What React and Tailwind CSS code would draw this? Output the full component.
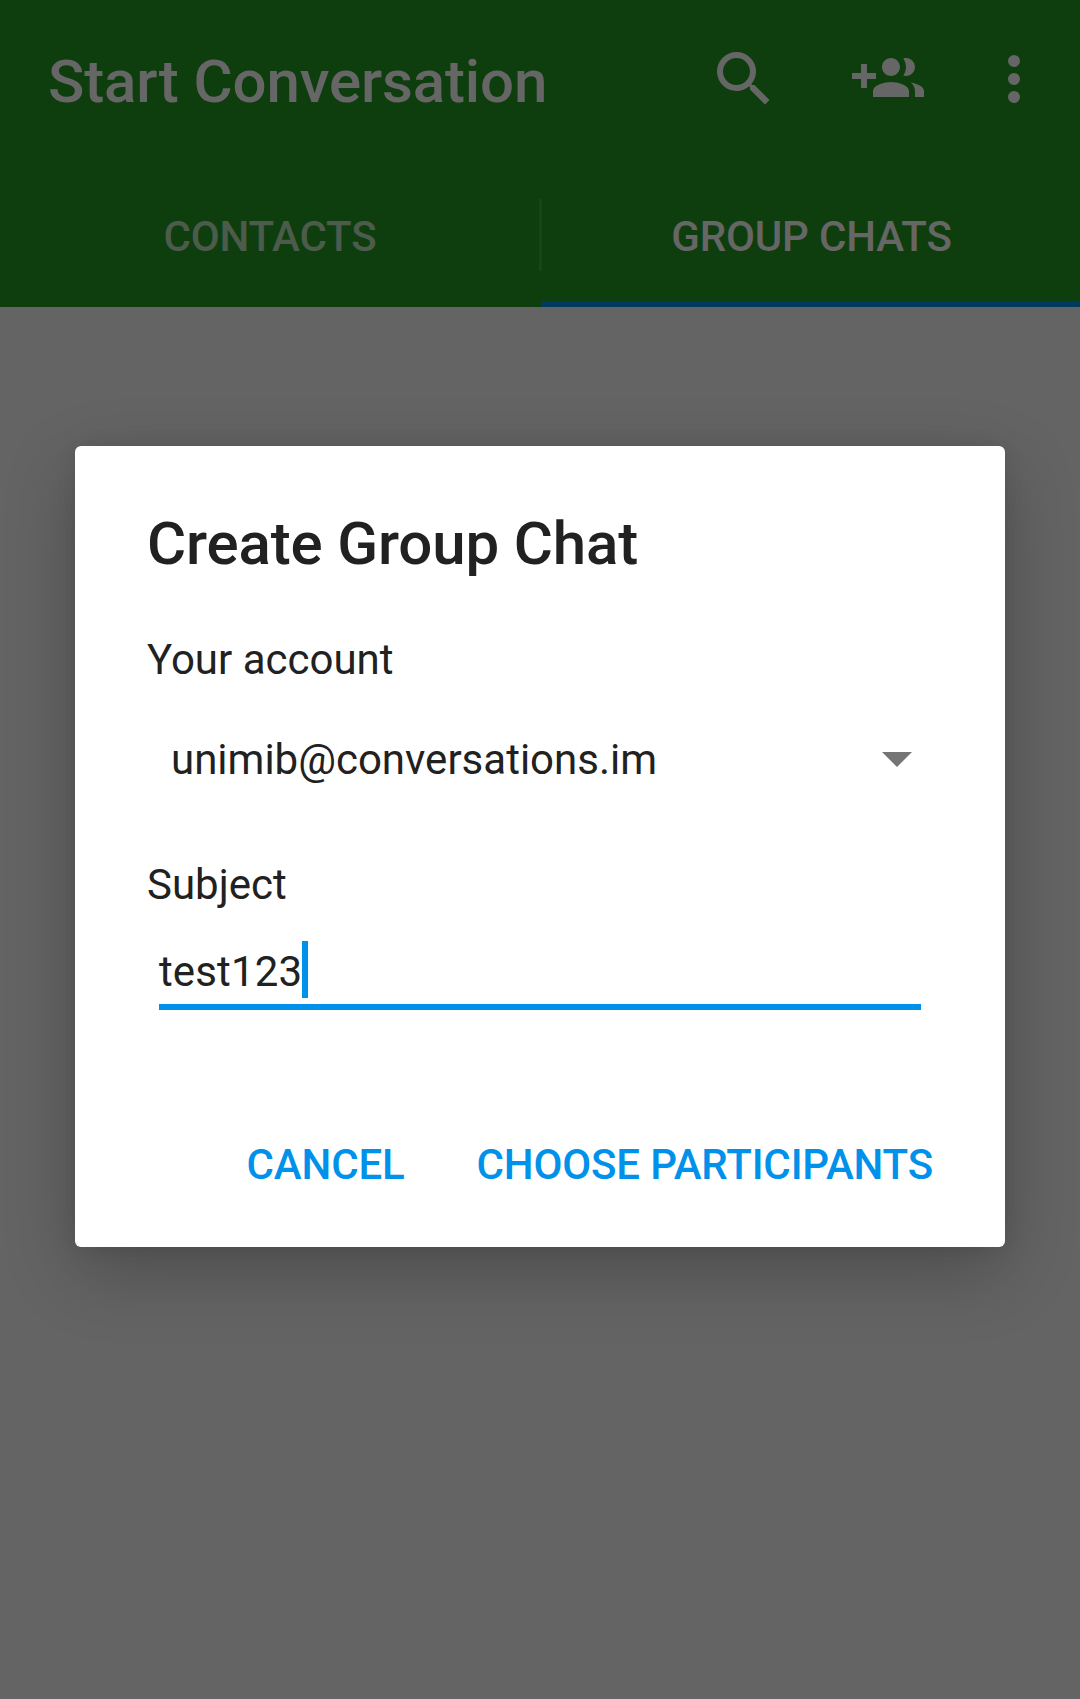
const SearchIcon = () => (
  <svg className="size-[72px]" viewBox="0 0 24 24" fill="currentColor">
    <path d="M15.5 14h-.79l-.28-.27A6.471 6.471 0 0 0 16 9.5 6.5 6.5 0 1 0 9.5 16c1.61 0 3.09-.59 4.23-1.57l.27.28v.79l5 4.99L20.49 19l-4.99-5zm-6 0C7.01 14 5 11.99 5 9.5S7.01 5 9.5 5 14 7.01 14 9.5 11.99 14 9.5 14z" />
  </svg>
);

const GroupAddIcon = () => (
  <svg className="size-[72px]" viewBox="0 0 24 24" fill="currentColor">
    <path d="M8 10H5V7H3v3H0v2h3v3h2v-3h3v-2zm10 1c1.66 0 2.99-1.34 2.99-3S19.66 5 18 5c-.32 0-.63.05-.91.14.57.81.9 1.79.9 2.86s-.34 2.04-.9 2.86c.28.09.59.14.91.14zm-5 0c1.66 0 2.99-1.34 2.99-3S14.66 5 13 5c-1.66 0-3 1.34-3 3s1.34 3 3 3zm6.62 2.16c.83.73 1.38 1.66 1.38 2.84v2h3v-2c0-1.54-2.37-2.49-4.38-2.84zM13 13c-2 0-6 1-6 3v2h12v-2c0-2-4-3-6-3z" />
  </svg>
);

const MoreIcon = () => (
  <svg className="size-[72px]" viewBox="0 0 24 24" fill="currentColor">
    <circle cx="12" cy="6" r="2" />
    <circle cx="12" cy="12" r="2" />
    <circle cx="12" cy="18" r="2" />
  </svg>
);

function Header() {
  return (
    <header className="flex h-[307px] flex-col bg-[#0f3e0e] text-[#666666]">
      <div className="flex h-[163px] items-start justify-between pt-[43px] pr-[30px] pl-12">
        <h1 className="text-[60px] leading-[77px] font-medium tracking-[-0.13px] whitespace-nowrap">Start Conversation</h1>
        <div className="flex">
          <button aria-label="Search"><SearchIcon /></button>
          <button aria-label="Add group" className="ml-[72px]"><GroupAddIcon /></button>
          <button aria-label="More options" className="ml-[54px]"><MoreIcon /></button>
        </div>
      </div>
      <nav className="flex h-[144px] text-[42px] leading-[49px] font-medium tracking-[-0.16px]">
        <button className="w-[539px] pt-[3px] pl-px text-[#4c5b4b]">CONTACTS</button>
        <span className="mt-9 h-[72px] w-[3px] bg-[#174516]" />
        <button className="flex-1 border-b-[6px] border-[#003a5e] pt-[9px] pl-px">GROUP CHATS</button>
      </nav>
    </header>
  );
}

function CreateGroupDialog() {
  return (
    <div
      role="dialog"
      className="h-[801px] w-[930px] rounded-[6px] bg-white px-[72px] text-[42px] leading-[49px] text-[#212121] shadow-[0_24px_72px_rgba(0,0,0,0.24),0_0_20px_rgba(0,0,0,0.08)]"
    >
      <h2 className="pt-[62px] text-[60px] leading-[71px] font-medium tracking-[-0.15px]">Create Group Chat</h2>
      <p className="mt-14">Your account</p>
      <div className="mt-[51px] flex items-center justify-between pr-[21px] pl-6">
        <span>unimib@conversations.im</span>
        <svg className="h-[15px] w-[30px]" viewBox="0 0 30 15" fill="#757575">
          <path d="M0 0h30L15 15z" />
        </svg>
      </div>
      <p className="mt-[76px]">Subject</p>
      <div className="mx-3 mt-8 flex h-[69px] items-start border-b-[6px] border-[#0091ea]">
        <span className="mt-[6px] tracking-[0.13px]">test123</span>
        <span className="h-[57px] w-[6px] bg-[#0091ea]" />
      </div>
      <div className="mt-[130px] flex justify-end gap-[72px] font-medium tracking-[-0.14px] text-[#0091ea]">
        <button>CANCEL</button>
        <button className="tracking-[-0.16px]">CHOOSE PARTICIPANTS</button>
      </div>
    </div>
  );
}

export default function App() {
  return (
    <div className="relative h-[1699px] w-[1080px] overflow-hidden bg-[#646464] font-[Roboto,sans-serif]">
      <Header />
      <div className="absolute inset-0 flex items-start justify-center pt-[446px]">
        <CreateGroupDialog />
      </div>
    </div>
  );
}
